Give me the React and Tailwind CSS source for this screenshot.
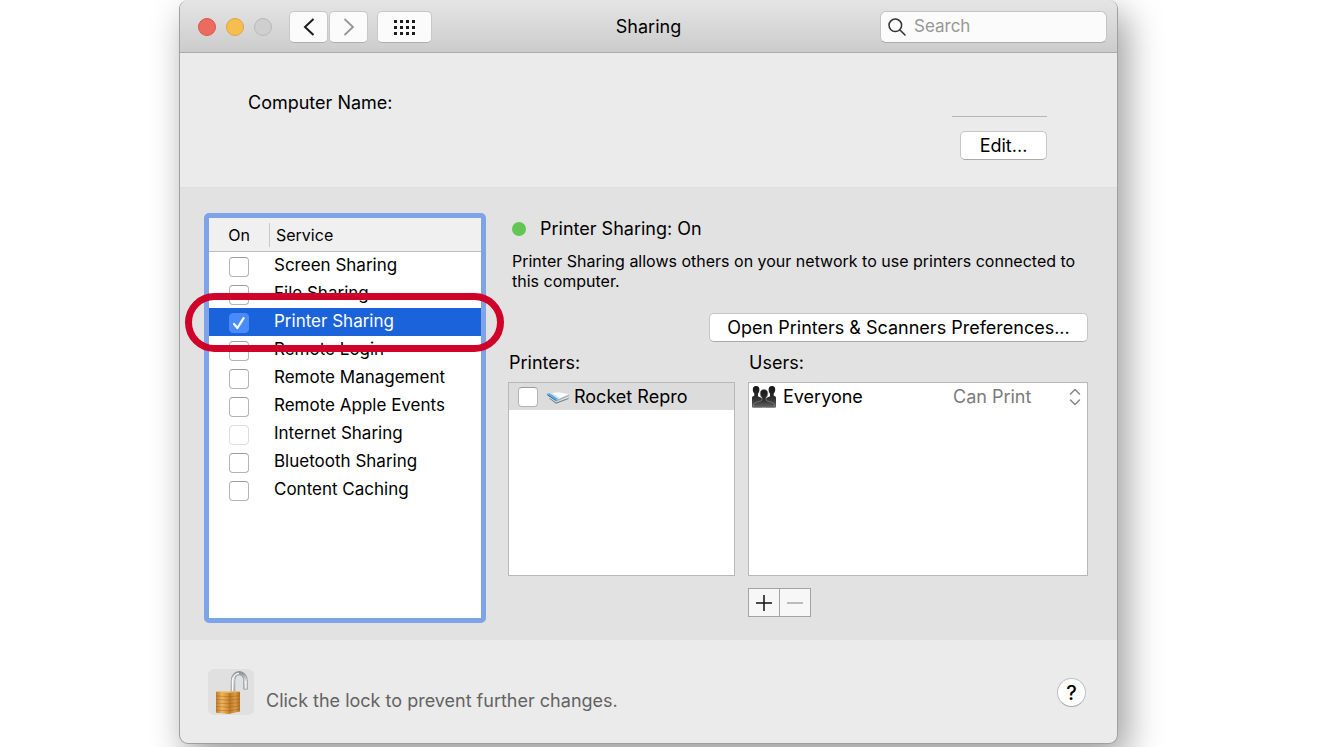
import { useState } from "react";

const initialServices = [
  { id: "screen", name: "Screen Sharing", on: false },
  { id: "file", name: "File Sharing", on: false },
  { id: "printer", name: "Printer Sharing", on: true },
  { id: "login", name: "Remote Login", on: false },
  { id: "management", name: "Remote Management", on: false },
  { id: "events", name: "Remote Apple Events", on: false },
  { id: "internet", name: "Internet Sharing", on: false, disabled: true },
  { id: "bluetooth", name: "Bluetooth Sharing", on: false },
  { id: "caching", name: "Content Caching", on: false },
];

const Checkbox = ({ id, ...props }) => (
  <span className="relative block size-5">
    <input
      id={id}
      type="checkbox"
      className="peer block size-5 appearance-none rounded-[4px] border border-[#b4b4b4] border-t-[#9c9c9c] bg-white checked:border-[#4a8bfb] checked:bg-[#4a8bfb] disabled:border-[#dcdcdc]"
      {...props}
    />
    <svg
      viewBox="0 0 20 20"
      className="pointer-events-none absolute inset-0 hidden size-5 peer-checked:block"
      fill="none"
      stroke="white"
      strokeWidth="2.2"
      strokeLinecap="round"
      strokeLinejoin="round"
    >
      <path d="M5 11l3.4 4L14.6 5.2" />
    </svg>
  </span>
);

const PushButton = ({ className, children }) => (
  <button
    type="button"
    className={`h-[29px] rounded-[5px] border border-[#c6c6c6] border-b-[#a9a9a9] bg-white text-lg leading-6 ${className}`}
  >
    {children}
  </button>
);

const ScannerIcon = () => (
  <svg viewBox="0 0 24 16" className="h-4 w-6 shrink-0">
    <path d="M2.500 9L10 14.800 22.500 10V8L11 11z" fill="#777d82" />
    <path d="M2.500 8L10 13.600 22.500 9V7L11 10z" fill="#dfe3e6" />
    <path d="M1 4.500L14 3.200 23 5.400 10.500 11z" fill="#fdfefe" />
    <path d="M10.500 11L23 5.400v1.500l-12.500 5.500z" fill="#a9b1b7" />
    <path d="M1 4.500l9.500 6.500v1.400L1.500 6.600z" fill="#2a78b8" />
    <path d="M1 4.500l3-.3L12.500 10l-2 1z" fill="#5fa9dc" />
    <path d="M4 4.200l2-.2 8 5.300-1.500.7z" fill="#cfe5f4" />
  </svg>
);

const GroupIcon = () => (
  <svg viewBox="0 0 26 24" className="h-6 w-[26px] shrink-0">
    <defs>
      <linearGradient id="people" x1="0" y1="0" x2="0" y2="1">
        <stop offset="0" stopColor="#151515" />
        <stop offset="0.6" stopColor="#303030" />
        <stop offset="1" stopColor="#686868" />
      </linearGradient>
    </defs>
    <g fill="url(#people)">
      <path d="M5 1C7.500 1 8.600 2.600 8.400 5c-.1 1.600-.7 2.800-1.400 3.700v2.500c1 .8 3.200 1 4 2.200V22.500H1V12.800c.2-1.700 1.600-1.500 2.300-2.300V8.500C2.400 7.500 1.900 6.500 1.800 5 1.700 2.600 2.800 1 5 1z" />
      <path d="M21 1c2.300 0 3.300 1.600 3.200 4-.1 1.500-.6 2.500-1.500 3.500v2c.8.800 2.100.6 2.300 2.300V22.500H15v-9.100c.8-1.200 3-1.400 4-2.200V8.700c-.7-.9-1.300-2.100-1.400-3.700C17.400 2.600 18.700 1 21 1z" />
    </g>
    <path
      d="M13 4.500c2.900 0 4 1.900 3.800 4.300-.1 1.800-.8 3-1.800 4v2.400c1.200 1.600 7 1.200 8.500 4.300V22.500h-21v-3c1.500-3.100 7.300-2.700 8.500-4.300v-2.400c-1-1-1.700-2.200-1.800-4C9 6.400 10.100 4.500 13 4.500z"
      fill="url(#people)"
      stroke="#8d8d8d"
      strokeWidth="0.6"
    />
  </svg>
);

const LockIcon = () => (
  <svg viewBox="0 0 46 46" className="size-[46px]">
    <defs>
      <linearGradient id="brass" x1="0" y1="0" x2="1" y2="0">
        <stop offset="0" stopColor="#c27a20" />
        <stop offset="0.25" stopColor="#eeb861" />
        <stop offset="0.52" stopColor="#d08a30" />
        <stop offset="0.54" stopColor="#b87426" />
        <stop offset="0.8" stopColor="#dc9b45" />
        <stop offset="1" stopColor="#b06f22" />
      </linearGradient>
      <linearGradient id="steel" x1="0" y1="0" x2="0" y2="1">
        <stop offset="0" stopColor="#8e979c" />
        <stop offset="0.35" stopColor="#d3d9dc" />
        <stop offset="1" stopColor="#b4bcc0" />
      </linearGradient>
    </defs>
    <path d="M25 23V12C25 1.500 37.500 1.500 37.500 12V20.500" fill="none" stroke="#8a9297" strokeWidth="4.400" />
    <path d="M25 23V12C25 1.500 37.500 1.500 37.500 12V20" fill="none" stroke="url(#steel)" strokeWidth="3.200" />
    <path d="M24.600 22V12C24.800 7 28 4.500 31 4.400M37.800 12v7.500" fill="none" stroke="#f8fafb" strokeWidth="1.200" />
    <path d="M8 22.800l12-.8 12 .8V42.500L20.500 45 8 43.800z" fill="url(#brass)" />
    <path d="M8 22.800l12-.8 12 .8-11.500 1z" fill="#f3c67a" />
    <path
      d="M8 27l12.500.7L32 26.800M8 30.500l12.500.7L32 30.200M8 34l12.500.7L32 33.600M8 37.500l12.500.7L32 37M8 41l12.500.8L32 40.200"
      fill="none"
      stroke="#95591a"
      strokeOpacity="0.45"
      strokeWidth="0.9"
    />
  </svg>
);

const TitleBar = () => (
  <header className="grid h-[53px] grid-cols-[1fr_auto_1fr] items-center border-b border-[#acacac] bg-gradient-to-b from-[#e5e5e5] to-[#cccccc] px-2.5 pt-0.5">
    <div className="flex items-center pl-2">
      <div className="flex gap-[10px]">
        <button type="button" aria-label="Close" className="size-[18px] rounded-full border border-[#d9564c] bg-[#ed6a5f]" />
        <button type="button" aria-label="Minimize" className="size-[18px] rounded-full border border-[#dfa63c] bg-[#f6be4f]" />
        <button type="button" aria-label="Zoom" disabled className="size-[18px] rounded-full border border-[#b9b9b9] bg-[#cfcfcf]" />
      </div>
      <div className="ml-[17px] flex gap-px">
        <button type="button" aria-label="Back" className="flex h-8 w-[39px] items-center justify-center rounded-[5px] border border-[#c8c8c8] border-b-[#adadad] bg-[#fbfbfb]">
          <svg viewBox="0 0 12 18" className="h-[18px] w-3" fill="none" stroke="#1c1c1c" strokeWidth="2">
            <path d="M10.500 1L2 9l8.500 8" />
          </svg>
        </button>
        <button type="button" aria-label="Forward" className="flex h-8 w-[39px] items-center justify-center rounded-[5px] border border-[#c8c8c8] border-b-[#adadad] bg-[#fbfbfb]">
          <svg viewBox="0 0 12 18" className="h-[18px] w-3" fill="none" stroke="#959595" strokeWidth="1.800">
            <path d="M1.500 1L10 9l-8.500 8" />
          </svg>
        </button>
      </div>
      <button type="button" aria-label="Show All" className="ml-[9px] flex h-8 w-[55px] items-center justify-center rounded-[5px] border border-[#c8c8c8] border-b-[#adadad] bg-[#fbfbfb]">
        <svg viewBox="0 0 21 15" className="h-[15px] w-[21px]" stroke="#1c1c1c" strokeWidth="3" strokeDasharray="3 3">
          <path d="M0 1.500h21M0 7.500h21M0 13.500h21" />
        </svg>
      </button>
    </div>
    <h1 className="text-lg">Sharing</h1>
    <label className="flex h-8 w-[227px] items-center gap-2 justify-self-end rounded-[6px] border border-[#c4c4c4] border-b-[#ababab] bg-[#fbfbfb] px-[7px]">
      <svg viewBox="0 0 18 18" className="size-[18px] shrink-0" fill="none" stroke="#333" strokeWidth="1.500" strokeLinecap="round">
        <circle cx="7.300" cy="7.300" r="6.300" />
        <path d="M12 12l5 5" />
      </svg>
      <input
        type="search"
        aria-label="Search"
        placeholder="Search"
        className="w-full min-w-0 bg-transparent text-[17px] outline-none placeholder:text-[#979797]"
      />
    </label>
  </header>
);

const ServiceList = () => {
  const [services, setServices] = useState(initialServices);
  const [selected, setSelected] = useState("printer");

  const toggle = (id) => {
    setServices((prev) => prev.map((s) => (s.id === id ? { ...s, on: !s.on } : s)));
  };

  return (
    <div className="relative h-[410px] w-[282px] shrink-0 rounded-[5px] border-[5px] border-[#7ea3e6] bg-white">
      <table className="w-full table-fixed border-separate border-spacing-0 text-left text-[17px]">
        <thead className="bg-[#f0f0f0] text-base">
          <tr className="h-[34px]">
            <th className="w-[60px] border-b border-[#bdbdbd] p-0 text-center font-normal">On</th>
            <th className="border-b border-[#bdbdbd] p-0 font-normal">
              <span className="block border-l border-[#c9c9c9] pl-1.5">Service</span>
            </th>
          </tr>
        </thead>
        <tbody>
          {services.map((service) => (
            <tr
              key={service.id}
              onClick={() => setSelected(service.id)}
              className={`h-7 ${selected === service.id ? "bg-[#1b63da] text-white" : ""}`}
            >
              <td className="p-0 pt-0.5 pl-5">
                <Checkbox
                  id={service.id}
                  checked={service.on}
                  disabled={service.disabled}
                  onChange={() => toggle(service.id)}
                />
              </td>
              <td className="p-0 pl-[5px] leading-6">
                <label htmlFor={service.id} className="block pb-0.5">{service.name}</label>
              </td>
            </tr>
          ))}
        </tbody>
      </table>
      {/* callout around the selected service */}
      <div className="pointer-events-none absolute top-[75px] -right-[23px] -left-6 h-[59px] rounded-full border-[7px] border-[#cf0229]" />
    </div>
  );
};

const PrinterDetails = () => (
  <section className="min-w-0 flex-1 pt-1">
    <div className="flex h-6 items-center gap-3.5 pl-1">
      <span className="size-3.5 rounded-full bg-[#62c554]" />
      <h2 className="text-lg">Printer Sharing: On</h2>
    </div>
    <p className="mt-2.5 pl-1 text-base leading-5">
      Printer Sharing allows others on your network to use printers connected to this computer.
    </p>
    <div className="mt-[22px] flex justify-end">
      <PushButton className="w-[379px]">Open Printers &amp; Scanners Preferences...</PushButton>
    </div>

    <div className="mt-[9px] flex gap-[13px]">
      <div className="w-[227px]">
        <h3 className="pl-px text-lg leading-6">Printers:</h3>
        <ul className="mt-[7px] h-[194px] border border-[#b8b8b8] bg-white">
          <li className="flex h-[27px] items-center bg-[#dcdcdc] pl-[9px]">
            <Checkbox id="rocket-repro" />
            <label htmlFor="rocket-repro" className="flex items-center gap-1 pl-2 text-lg leading-6">
              <ScannerIcon />
              Rocket Repro
            </label>
          </li>
        </ul>
      </div>

      <div className="flex-1">
        <h3 className="pl-px text-lg leading-6">Users:</h3>
        <ul className="mt-[7px] h-[194px] border border-[#b8b8b8] bg-white">
          <li className="flex h-7 items-center pr-1.5 pl-0.5">
            <GroupIcon />
            <span className="flex-1 pl-1.5 text-lg leading-6">Everyone</span>
            <span className="relative">
              <select
                aria-label="Access for Everyone"
                className="block h-6 w-[128px] appearance-none bg-transparent text-lg leading-6 text-[#7b7b7b]"
              >
                <option>Can Print</option>
              </select>
              <svg
                viewBox="0 0 12 18"
                className="pointer-events-none absolute top-[3px] right-0 h-[18px] w-3"
                fill="none"
                stroke="#858585"
                strokeWidth="1.500"
                strokeLinecap="round"
                strokeLinejoin="round"
              >
                <path d="M1.500 6L6 1.500 10.500 6M1.500 12L6 16.500 10.500 12" />
              </svg>
            </span>
          </li>
        </ul>
        <div className="mt-3 flex">
          <button type="button" aria-label="Add user" className="flex h-[29px] w-8 items-center justify-center border border-[#a3a3a3] bg-[#f7f7f7]">
            <svg viewBox="0 0 16 16" className="size-4" stroke="#111" strokeWidth="1.500">
              <path d="M0 8h16M8 0v16" />
            </svg>
          </button>
          <button type="button" aria-label="Remove user" className="-ml-px flex h-[29px] w-8 items-center justify-center border border-[#a3a3a3] bg-[#f7f7f7]">
            <svg viewBox="0 0 16 16" className="size-4" stroke="#a8a8a8" strokeWidth="1.500">
              <path d="M0 8h16" />
            </svg>
          </button>
        </div>
      </div>
    </div>
  </section>
);

const App = () => {
  return (
    <main className="min-h-screen overflow-hidden bg-white pr-[210px] pl-[179px] font-['Inter',sans-serif] text-black">
      <div className="overflow-hidden rounded-[9px] border border-t-0 border-[#a0a0a0] bg-[#ebebeb] shadow-[8px_14px_36px_rgba(0,0,0,0.4)]">
        <TitleBar />

        <section className="flex h-[135px] items-start justify-between border-b border-[#dedede] pr-[70px] pl-[68px]">
          <p className="mt-[38px] text-lg leading-6">Computer Name:</p>
          <div className="mt-[63px] flex w-[95px] flex-col items-end border-t border-[#b5b5b5] pt-3.5">
            <PushButton className="w-[87px]">Edit...</PushButton>
          </div>
        </section>

        <div className="flex gap-[22px] bg-[#e2e2e2] pt-[25px] pr-[29px] pb-[17px] pl-6">
          <ServiceList />
          <PrinterDetails />
        </div>

        <footer className="flex h-[103px] items-start pt-[29px] pr-[31px] pl-7">
          <button type="button" aria-label="Lock" className="rounded-[6px] bg-[#e0e0e0]">
            <LockIcon />
          </button>
          <p className="mt-5 ml-3 flex-1 text-lg leading-6 text-[#636363]">
            Click the lock to prevent further changes.
          </p>
          <button
            type="button"
            aria-label="Help"
            className="mt-[9px] size-[29px] rounded-full border border-[#c2c2c2] border-b-[#a8a8a8] bg-white text-xl leading-6 font-medium"
          >
            ?
          </button>
        </footer>
      </div>
    </main>
  );
};

export default App;
